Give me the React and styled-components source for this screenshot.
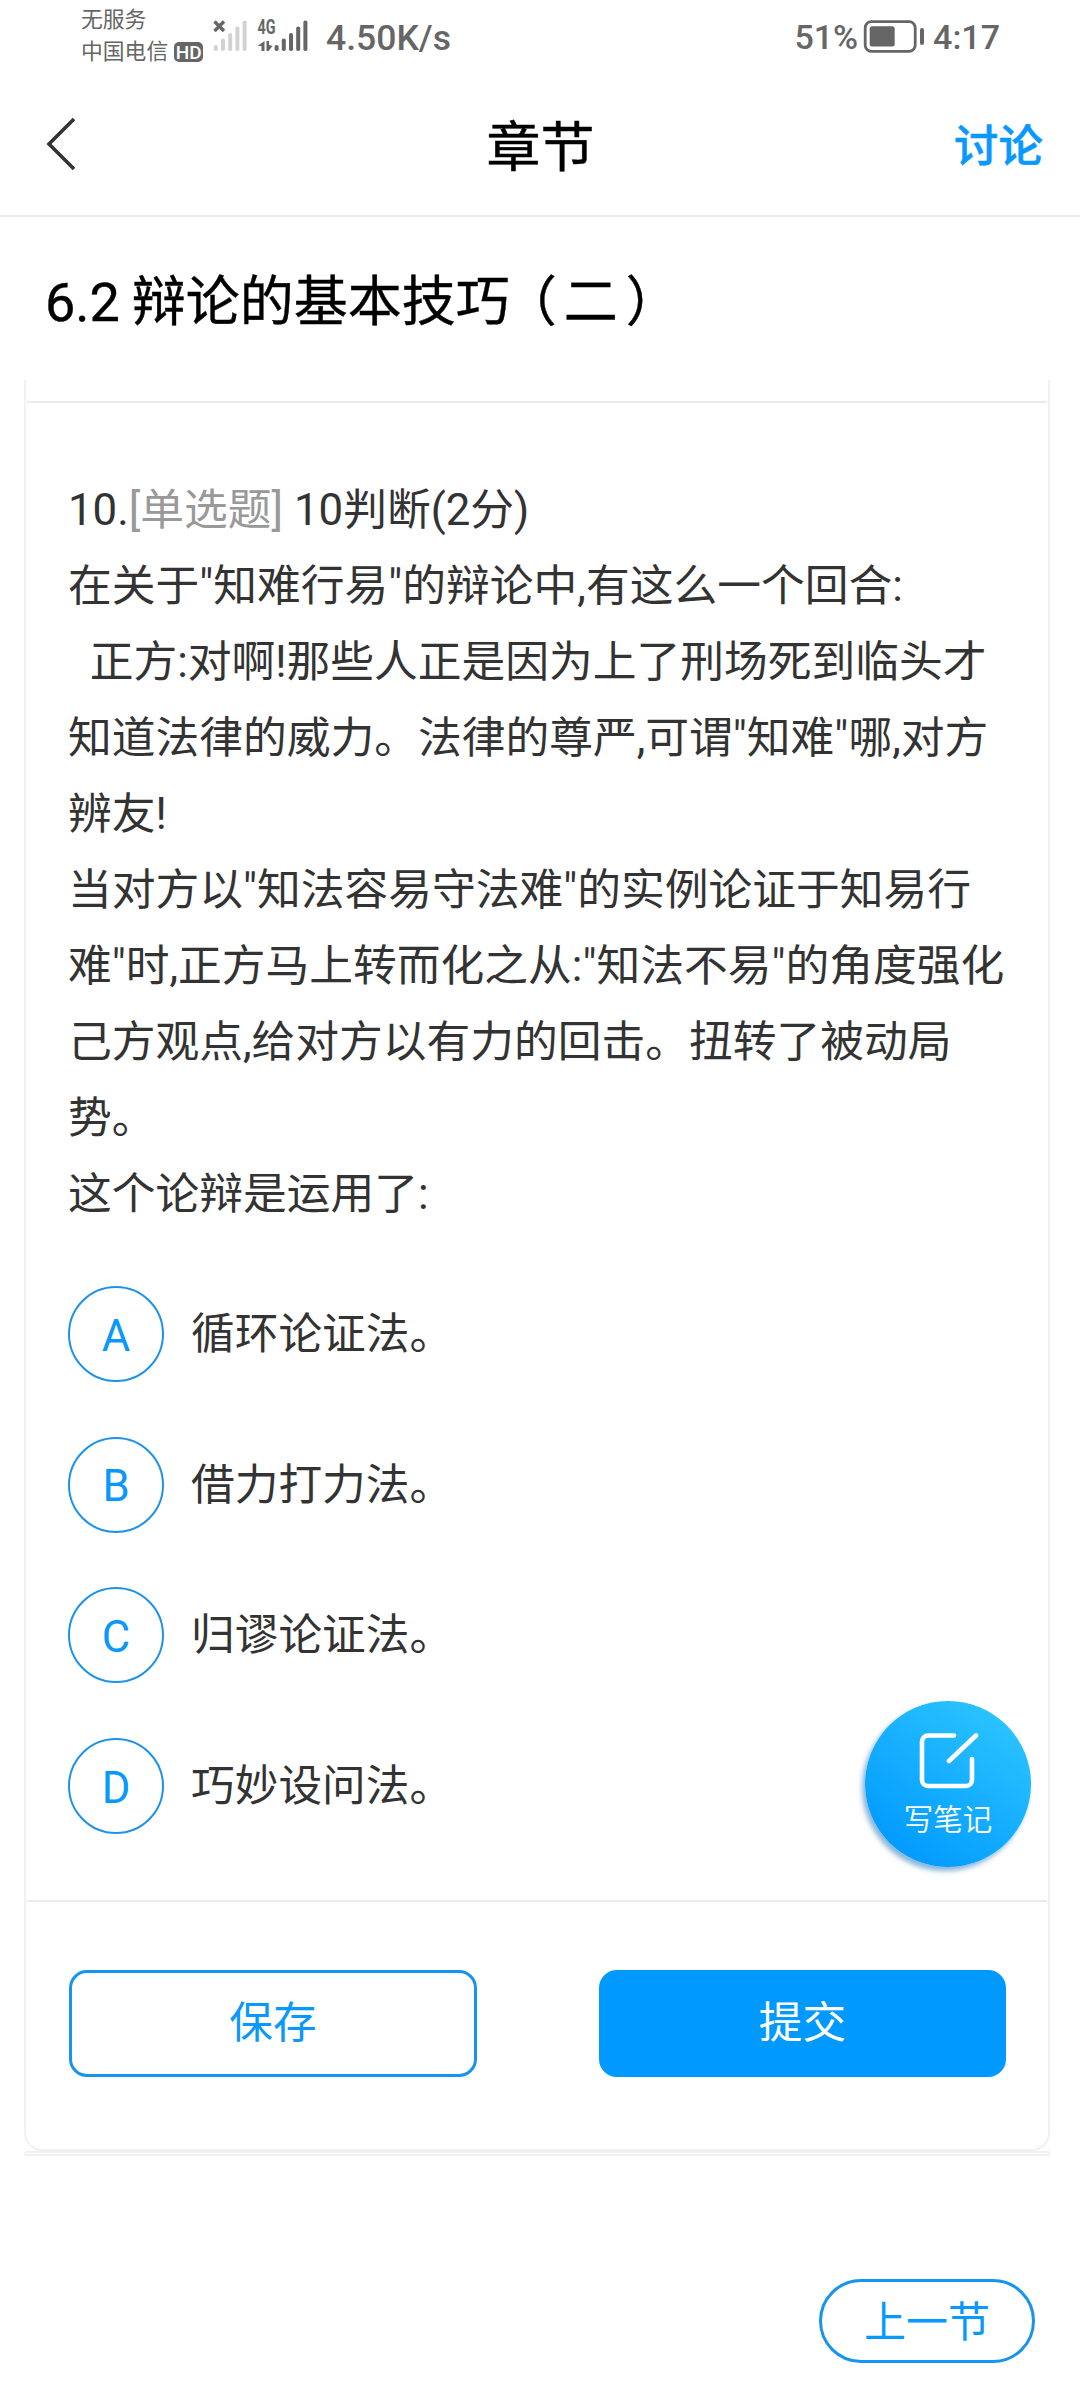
import React from 'react';
import styled, { createGlobalStyle } from 'styled-components';

const GlobalStyle = createGlobalStyle`
  * {
    box-sizing: border-box;
  }

  body {
    margin: 0;
    background: #fff;
    font-family: Roboto, 'Noto Sans CJK SC', sans-serif;
  }

  button {
    margin: 0;
    padding: 0;
    border: none;
    background: none;
    font-family: inherit;
  }
`;

const Screen = styled.div`
  position: relative;
  width: 1080px;
  height: 2400px;
  overflow: hidden;
`;

const StatusBar = styled.div`
  display: flex;
  justify-content: space-between;
  height: 72px;
  padding: 0 80px 0 81px;
  color: #666;
`;

const StatusGroup = styled.div`
  display: flex;
  align-items: center;
  height: 74px;
`;

const Carriers = styled.div`
  display: flex;
  flex-direction: column;
  width: 132px;
  padding-bottom: 3px;
  font-size: 21.8px;
  line-height: 32px;
`;

const CarrierRow = styled.div`
  display: flex;
  align-items: center;
  gap: 6px;
  height: 32px;
  white-space: nowrap;
`;

const HdBadge = styled.span`
  width: 29px;
  height: 20px;
  border-radius: 5px;
  background: #666;
  color: #fff;
  font-size: 19px;
  font-weight: 500;
  line-height: 21px;
  text-align: center;
`;

const StatusText = styled.span`
  font-size: ${props => props.$size}px;
  font-weight: 500;
  line-height: 40px;
  white-space: nowrap;
`;

const NetSpeed = styled(StatusText)`
  margin: 2px 0 0 15px;
`;

const NavBar = styled.header`
  display: grid;
  grid-template-columns: 1fr auto 1fr;
  align-items: center;
  height: 145px;
  padding: 0 37px 0 45px;
  border-bottom: 2px solid #ebebeb;
`;

const BackButton = styled.button`
  display: flex;
  width: 34px;
  height: 56px;
`;

const NavTitle = styled.h1`
  margin: 10px 0 0 -7px;
  font-size: 54px;
  font-weight: 400;
  line-height: 60px;
  color: #000;
  -webkit-text-stroke: 0.5px #000;
`;

const NavAction = styled.button`
  justify-self: end;
  margin-top: 7px;
  font-size: 44.5px;
  font-weight: 500;
  line-height: 60px;
  color: #0998fd;
  -webkit-text-stroke: 0.5px #0998fd;
`;

const SectionTitle = styled.h2`
  height: 163px;
  margin: 0;
  padding: 46px 45px 0;
  font-size: 54px;
  font-weight: 400;
  line-height: 80px;
  word-spacing: -1.5px;
  color: #000;
  -webkit-text-stroke: 0.4px #000;
`;

const OpenParen = styled.span`
  margin: 0 7px 0 20px;
  font-feature-settings: 'halt';
`;

const CloseParen = styled.span`
  margin-left: 8px;
  font-feature-settings: 'halt';
`;

const Card = styled.main`
  width: 1026px;
  height: 1771px;
  margin-left: 24px;
  padding-top: 21px;
  border: 2px solid #f1f1f1;
  border-top: none;
  border-radius: 0 0 18px 18px;
`;

const CardStrip = styled.div`
  width: 1026px;
  height: 5px;
  margin-left: 24px;
  border: 2px solid #f1f1f1;
  border-radius: 2px;
`;

const Divider = styled.div`
  height: 2px;
  margin: 0 1px;
  background: #ebebeb;
`;

const QuestionBody = styled.section`
  height: 1497px;
  padding: 69px 42px 0;
`;

const Line = styled.p`
  margin: 0;
  font-size: 43.75px;
  line-height: 76px;
  color: #333;
  white-space: pre;
`;

const QuestionType = styled.span`
  color: #999;
`;

const Options = styled.ul`
  display: flex;
  flex-direction: column;
  gap: 54.7px;
  margin: 54px 0 0;
  padding: 0;
  list-style: none;
`;

const Option = styled.li`
  display: flex;
  align-items: center;
  gap: 27px;
  height: 96px;
  font-size: 43.7px;
  color: #333;
`;

const OptionKey = styled.span`
  display: flex;
  align-items: center;
  justify-content: center;
  width: 96px;
  height: 96px;
  padding-top: 3px;
  border: 2px solid #1c92ea;
  border-radius: 50%;
  color: #0998fd;
`;

const OptionText = styled.span`
  line-height: 64px;
`;

const Actions = styled.div`
  display: flex;
  justify-content: space-between;
  padding: 68px 42px 0 43px;
`;

const ActionButton = styled.button`
  width: ${props => (props.$primary ? 407 : 408)}px;
  height: 107px;
  padding-bottom: 10px;
  border: 3px solid ${props => (props.$primary ? '#0099ff' : '#1795ee')};
  border-radius: 18px;
  background: ${props => (props.$primary ? '#0099ff' : '#fff')};
  color: ${props => (props.$primary ? '#fff' : '#0998fd')};
  font-size: 43.7px;
`;

const PrevButton = styled.button`
  display: block;
  width: 216px;
  height: 84px;
  margin: 123px 45px 0 auto;
  padding-bottom: 5px;
  border: 3px solid #1795ee;
  border-radius: 42px;
  color: #0998fd;
  font-size: 42px;
`;

const NoteButton = styled.button`
  position: absolute;
  top: 1701px;
  left: 865px;
  display: flex;
  flex-direction: column;
  align-items: center;
  width: 166px;
  height: 166px;
  padding-top: 30px;
  border-radius: 50%;
  background: linear-gradient(35deg, #0099ff 10%, #2cc4ff 90%);
  box-shadow: -3px 4px 5px rgba(20, 110, 180, 0.5);
  color: #fff;
  font-size: 29.5px;
  font-weight: 350;
  line-height: 40px;
`;

const NoteLabel = styled.span`
  margin-top: 9px;
`;

const options = [
  { key: 'A', text: '循环论证法。' },
  { key: 'B', text: '借力打力法。' },
  { key: 'C', text: '归谬论证法。' },
  { key: 'D', text: '巧妙设问法。' },
];

const questionLines = [
  '在关于"知难行易"的辩论中,有这么一个回合:',
  '  正方:对啊!那些人正是因为上了刑场死到临头才',
  '知道法律的威力。法律的尊严,可谓"知难"哪,对方',
  '辨友!',
  '当对方以"知法容易守法难"的实例论证于知易行',
  '难"时,正方马上转而化之从:"知法不易"的角度强化',
  '己方观点,给对方以有力的回击。扭转了被动局',
  '势。',
  '这个论辩是运用了:',
];

const barTops = [45, 38.5, 33, 26.5, 20.5];

const SignalBars = ({ x, color }) => (
  <g fill={color}>
    {barTops.map((top, index) => (
      <rect key={top} x={x + index * 7.2} y={top} width="4" height={51 - top} rx="1.8" />
    ))}
  </g>
);

const SignalIcons = () => (
  <svg width="98" height="74" viewBox="213 0 98 74">
    <path d="M214.500 21.500l9.500 9.500M224 21.500l-9.500 9.500" stroke="#666" strokeWidth="3.4" fill="none" />
    <SignalBars x={213.8} color="#d2d2d2" />
    <text
      x="257.5"
      y="34"
      fontSize="19.5"
      fontWeight="700"
      fontFamily="Roboto"
      textLength="18"
      lengthAdjust="spacingAndGlyphs"
      fill="#666"
    >
      4G
    </text>
    <path d="M264.500 41v10h-3v-5h-4z" fill="#666" />
    <path d="M266.500 41h2.600v4l3.400 1-4 5h-2z" fill="#666" />
    <SignalBars x={274.6} color="#666" />
  </svg>
);

const BatterySvg = styled.svg`
  margin: 0 8px 0 5px;
`;

const BatteryIcon = () => (
  <BatterySvg width="62" height="74" viewBox="864 0 62 74">
    <rect x="866.2" y="21.7" width="50" height="29.6" rx="6" fill="none" stroke="#666" strokeWidth="2.8" />
    <rect x="870.7" y="26.3" width="25" height="20.2" rx="2.5" fill="#666" />
    <rect x="921" y="28" width="4" height="17" rx="2" fill="#666" />
  </BatterySvg>
);

const BackIcon = () => (
  <svg width="34" height="56" viewBox="0 0 34 56" fill="none" stroke="#333" strokeWidth="3.6">
    <path d="M29 3L4 28l25 25" />
  </svg>
);

const NoteIcon = () => (
  <svg width="62" height="60" viewBox="0 0 62 60" fill="none" stroke="#fff" strokeWidth="4.6" strokeLinecap="round">
    <path d="M37 4.500H11a6 6 0 0 0-6 6V49a6 6 0 0 0 6 6h38a6 6 0 0 0 6-6V28" />
    <path d="M32 30L59 4.500" />
  </svg>
);

const App = () => {
  return (
    <Screen>
      <GlobalStyle />
      <StatusBar>
        <StatusGroup>
          <Carriers>
            <CarrierRow>无服务</CarrierRow>
            <CarrierRow>
              中国电信
              <HdBadge>HD</HdBadge>
            </CarrierRow>
          </Carriers>
          <SignalIcons />
          <NetSpeed $size={35.5}>4.50K/s</NetSpeed>
        </StatusGroup>
        <StatusGroup>
          <StatusText $size={34}>51%</StatusText>
          <BatteryIcon />
          <StatusText $size={34}>4:17</StatusText>
        </StatusGroup>
      </StatusBar>

      <NavBar>
        <BackButton>
          <BackIcon />
        </BackButton>
        <NavTitle>章节</NavTitle>
        <NavAction>讨论</NavAction>
      </NavBar>

      <SectionTitle>
        6.2 辩论的基本技巧<OpenParen>（</OpenParen>二<CloseParen>）</CloseParen>
      </SectionTitle>

      <Card>
        <Divider />
        <QuestionBody>
          <Line>
            10.<QuestionType>[单选题]</QuestionType> 10判断(2分)
          </Line>
          {questionLines.map(line => (
            <Line key={line}>{line}</Line>
          ))}
          <Options>
            {options.map(option => (
              <Option key={option.key}>
                <OptionKey>{option.key}</OptionKey>
                <OptionText>{option.text}</OptionText>
              </Option>
            ))}
          </Options>
        </QuestionBody>
        <Divider />
        <Actions>
          <ActionButton>保存</ActionButton>
          <ActionButton $primary>提交</ActionButton>
        </Actions>
      </Card>
      <CardStrip />

      <PrevButton>上一节</PrevButton>

      <NoteButton>
        <NoteIcon />
        <NoteLabel>写笔记</NoteLabel>
      </NoteButton>
    </Screen>
  );
};

export default App;
